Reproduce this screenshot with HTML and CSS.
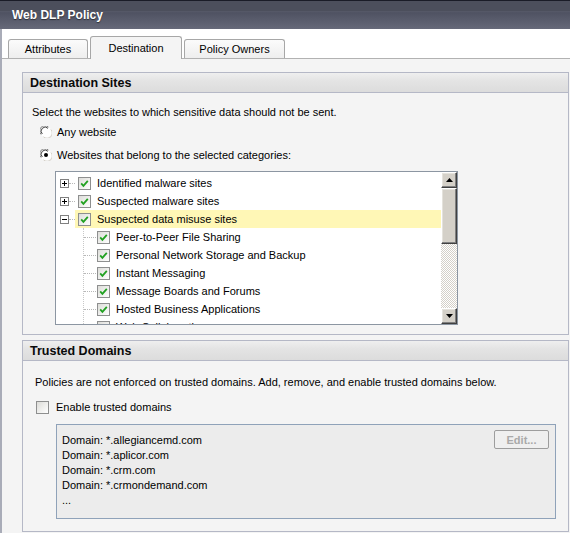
FILE: index.html
```html
<!DOCTYPE html>
<html>
<head>
<meta charset="utf-8">
<link rel="stylesheet" href="styles.css">
</head>
<body>
<div class="header"><span class="title">Web DLP Policy</span></div>
<div class="main">
  <div class="tabs">
    <div class="tab t-attr">Attributes</div>
    <div class="tab active t-dest">Destination</div>
    <div class="tab t-own">Policy Owners</div>
  </div>
  <div class="panel">
    <section class="group dest">
      <div class="group-head">Destination Sites</div>
      <div class="group-body dest-body">
        <p class="intro">Select the websites to which sensitive data should not be sent.</p>
        <div class="radio-row">
          <svg class="radio" width="12" height="12" viewBox="0 0 12 12"><circle cx="6" cy="6" r="5.5" fill="#fff"/><path d="M1.2 8.5A5 5 0 0 1 8.5 1.2" fill="none" stroke="#808080" stroke-width="1"/><path d="M2.3 8A4 4 0 0 1 8 2.3" fill="none" stroke="#404040" stroke-width="1"/><path d="M3.5 10.8A5 5 0 0 0 10.8 3.5" fill="none" stroke="#d4d0c8" stroke-width="1"/></svg>
          <span>Any website</span>
        </div>
        <div class="radio-row">
          <svg class="radio" width="12" height="12" viewBox="0 0 12 12"><circle cx="6" cy="6" r="5.5" fill="#fff"/><path d="M1.2 8.5A5 5 0 0 1 8.5 1.2" fill="none" stroke="#808080" stroke-width="1"/><path d="M2.3 8A4 4 0 0 1 8 2.3" fill="none" stroke="#404040" stroke-width="1"/><path d="M3.5 10.8A5 5 0 0 0 10.8 3.5" fill="none" stroke="#d4d0c8" stroke-width="1"/><circle cx="6" cy="6" r="2" fill="#000"/></svg>
          <span>Websites that belong to the selected categories:</span>
        </div>
        <div class="tree">
          <div class="tree-list">
            <div class="row parent">
              <svg class="exp" width="9" height="9" viewBox="0 0 9 9"><rect x="0.5" y="0.5" width="8" height="8" fill="#fff" stroke="#808080"/><path d="M2 4.5h5M4.5 2v5" stroke="#000"/></svg>
              <span class="hline"></span>
              <span class="item"><svg class="cb" width="13" height="13" viewBox="0 0 13 13"><rect x="0.5" y="0.5" width="12" height="12" fill="url(#g)" stroke="#8e8f8f"/><path d="M3.2 6.4l2.2 2.4 4.4-5" fill="none" stroke="#21a121" stroke-width="1.8"/></svg><span>Identified malware sites</span></span>
            </div>
            <div class="row parent">
              <svg class="exp" width="9" height="9" viewBox="0 0 9 9"><rect x="0.5" y="0.5" width="8" height="8" fill="#fff" stroke="#808080"/><path d="M2 4.5h5M4.5 2v5" stroke="#000"/></svg>
              <span class="hline"></span>
              <span class="item"><svg class="cb" width="13" height="13" viewBox="0 0 13 13"><rect x="0.5" y="0.5" width="12" height="12" fill="url(#g)" stroke="#8e8f8f"/><path d="M3.2 6.4l2.2 2.4 4.4-5" fill="none" stroke="#21a121" stroke-width="1.8"/></svg><span>Suspected malware sites</span></span>
            </div>
            <div class="row parent">
              <svg class="exp" width="9" height="9" viewBox="0 0 9 9"><rect x="0.5" y="0.5" width="8" height="8" fill="#fff" stroke="#808080"/><path d="M2 4.5h5" stroke="#000"/></svg>
              <span class="hline"></span>
              <span class="item selected"><svg class="cb" width="13" height="13" viewBox="0 0 13 13"><rect x="0.5" y="0.5" width="12" height="12" fill="url(#g)" stroke="#8e8f8f"/><path d="M3.2 6.4l2.2 2.4 4.4-5" fill="none" stroke="#21a121" stroke-width="1.8"/></svg><span>Suspected data misuse sites</span></span>
            </div>
            <div class="children">
              <div class="row child"><span class="cline"></span><svg class="cb" width="13" height="13" viewBox="0 0 13 13"><rect x="0.5" y="0.5" width="12" height="12" fill="url(#g)" stroke="#8e8f8f"/><path d="M3.2 6.4l2.2 2.4 4.4-5" fill="none" stroke="#21a121" stroke-width="1.8"/></svg><span>Peer-to-Peer File Sharing</span></div>
              <div class="row child"><span class="cline"></span><svg class="cb" width="13" height="13" viewBox="0 0 13 13"><rect x="0.5" y="0.5" width="12" height="12" fill="url(#g)" stroke="#8e8f8f"/><path d="M3.2 6.4l2.2 2.4 4.4-5" fill="none" stroke="#21a121" stroke-width="1.8"/></svg><span>Personal Network Storage and Backup</span></div>
              <div class="row child"><span class="cline"></span><svg class="cb" width="13" height="13" viewBox="0 0 13 13"><rect x="0.5" y="0.5" width="12" height="12" fill="url(#g)" stroke="#8e8f8f"/><path d="M3.2 6.4l2.2 2.4 4.4-5" fill="none" stroke="#21a121" stroke-width="1.8"/></svg><span>Instant Messaging</span></div>
              <div class="row child"><span class="cline"></span><svg class="cb" width="13" height="13" viewBox="0 0 13 13"><rect x="0.5" y="0.5" width="12" height="12" fill="url(#g)" stroke="#8e8f8f"/><path d="M3.2 6.4l2.2 2.4 4.4-5" fill="none" stroke="#21a121" stroke-width="1.8"/></svg><span>Message Boards and Forums</span></div>
              <div class="row child"><span class="cline"></span><svg class="cb" width="13" height="13" viewBox="0 0 13 13"><rect x="0.5" y="0.5" width="12" height="12" fill="url(#g)" stroke="#8e8f8f"/><path d="M3.2 6.4l2.2 2.4 4.4-5" fill="none" stroke="#21a121" stroke-width="1.8"/></svg><span>Hosted Business Applications</span></div>
              <div class="row child"><span class="cline"></span><svg class="cb" width="13" height="13" viewBox="0 0 13 13"><rect x="0.5" y="0.5" width="12" height="12" fill="url(#g)" stroke="#8e8f8f"/><path d="M3.2 6.4l2.2 2.4 4.4-5" fill="none" stroke="#21a121" stroke-width="1.8"/></svg><span>Web Collaboration</span></div>
            </div>
          </div>
          <div class="scrollbar">
            <div class="sb-btn"><svg width="7" height="4" viewBox="0 0 7 4"><path d="M3.5 0L7 4H0z" fill="#000"/></svg></div>
            <div class="sb-thumb"></div>
            <div class="sb-track"></div>
            <div class="sb-btn"><svg width="7" height="4" viewBox="0 0 7 4"><path d="M0 0h7L3.5 4z" fill="#000"/></svg></div>
          </div>
        </div>
      </div>
    </section>
    <section class="group trusted">
      <div class="group-head">Trusted Domains</div>
      <div class="group-body trusted-body">
        <p class="desc">Policies are not enforced on trusted domains. Add, remove, and enable trusted domains below.</p>
        <div class="check-row">
          <span class="box"></span>
          <span>Enable trusted domains</span>
        </div>
        <div class="domains">
          <div class="domain-list">
            <div>Domain: *.allegiancemd.com</div>
            <div>Domain: *.aplicor.com</div>
            <div>Domain: *.crm.com</div>
            <div>Domain: *.crmondemand.com</div>
            <div>...</div>
          </div>
          <div class="edit-btn">Edit...</div>
        </div>
      </div>
    </section>
  </div>
</div>
<svg width="0" height="0" class="defs"><defs><linearGradient id="g" x1="0" y1="0" x2="1" y2="1"><stop offset="0" stop-color="#dcdcd8"/><stop offset="1" stop-color="#ffffff"/></linearGradient></defs></svg>
</body>
</html>
```
FILE: styles.css
```css
* { box-sizing: border-box; }
html, body { margin: 0; padding: 0; }
body {
  background: #fff;
  font-family: "Liberation Sans", Arial, sans-serif;
  font-size: 11px;
  color: #000;
  width: 570px;
  height: 533px;
  overflow: hidden;
}
.defs { position: absolute; }
.header {
  height: 29px;
  border-top: 1px solid #1a1c27;
  background: linear-gradient(#4c4f5c, #4c4f5c 35%, #575a69 38%, #4f5262 42%, #666979);
  display: flex;
  align-items: center;
  padding-left: 12px;
}
.title {
  color: #fff;
  font-weight: bold;
  font-size: 12px;
  text-shadow: 0 1px 1px rgba(0,0,0,0.5);
}
.main {
  border-left: 2px solid #a9acb8;
  height: 504px;
  display: flex;
  flex-direction: column;
}
.tabs {
  height: 30px;
  display: flex;
  align-items: flex-end;
  gap: 2px;
  padding-left: 6px;
  border-bottom: 1px solid #b2b2b2;
}
.tab {
  height: 19px;
  border: 1px solid #a7a7a7;
  border-bottom: none;
  border-radius: 3px 3px 0 0;
  background: linear-gradient(#fbfbfb, #eeeeee);
  display: flex;
  align-items: center;
  justify-content: center;
  padding-bottom: 1px;
}
.t-attr { width: 80px; }
.t-dest { width: 92px; }
.t-own { width: 101px; }
.tab.active {
  height: 23px;
  margin-bottom: -1px;
  background: #f4f4f4;
  padding-bottom: 0;
}
.panel {
  flex: 1;
  background: #f4f4f4;
  padding: 13px 1px 0 20px;
  display: flex;
  flex-direction: column;
  gap: 5px;
}
.group {
  border: 1px solid #b5b8c6;
}
.group-head {
  height: 20px;
  border-bottom: 1px solid #b5b8c6;
  background: linear-gradient(#efefef, #e4e4e4 40%, #dcdcdc);
  font-weight: bold;
  font-size: 12.5px;
  padding-left: 7px;
  padding-top: 1px;
  display: flex;
  align-items: center;
  color: #0a0a0a;
}
.dest-body {
  padding: 11px 0 9px 9px;
}
.intro, .desc {
  margin: 0;
  height: 16px;
  line-height: 16px;
}
.radio-row {
  height: 23px;
  display: flex;
  align-items: center;
  padding-left: 8px;
  padding-top: 1px;
  gap: 5px;
}
.tree {
  margin: 5px 0 0 23px;
  width: 403px;
  height: 154px;
  border: 1px solid #8c96a2;
  background: #fff;
  display: flex;
}
.tree-list {
  flex: 1;
  overflow: hidden;
  padding-top: 2px;
}
.row {
  height: 18px;
  display: flex;
  align-items: center;
  position: relative;
}
.parent { padding-left: 4px; }
.exp { flex: none; }
.hline {
  width: 6px;
  border-top: 1px dotted #b8b8b8;
}
.item {
  height: 18px;
  display: flex;
  align-items: center;
  gap: 6px;
  padding-left: 3px;
  flex: 1;
}
.item.selected { background: #fff7b6; }
.cb { flex: none; }
.children {
  margin-left: 27px;
  border-left: 1px dotted #c8c8c8;
}
.child { gap: 6px; }
.cline {
  width: 12px;
  border-top: 1px dotted #b8b8b8;
  margin-right: -5px;
}
.scrollbar {
  width: 16px;
  display: flex;
  flex-direction: column;
}
.sb-btn, .sb-thumb {
  background: #d4d0c8;
  border: 1px solid;
  border-color: #ffffff #404040 #404040 #ffffff;
  box-shadow: inset -1px -1px 0 #808080, inset 1px 1px 0 #e4e2dc;
}
.sb-btn {
  height: 16px;
  display: flex;
  align-items: center;
  justify-content: center;
}
.sb-thumb { height: 56px; }
.sb-track {
  flex: 1;
  background: repeating-conic-gradient(#d4d0c8 0 25%, #ffffff 0 50%) 0 0 / 2px 2px;
}
.trusted-body {
  padding: 13px 12px 12px 12px;
}
.check-row {
  height: 20px;
  margin-top: 7px;
  display: flex;
  align-items: center;
  gap: 7px;
  padding-left: 1px;
}
.box {
  width: 13px;
  height: 13px;
  border: 1px solid #8e8f8f;
  background: linear-gradient(135deg, #dcdcd8, #ffffff);
}
.domains {
  margin: 7px 0 0 21px;
  width: 500px;
  height: 95px;
  border: 1px solid #8fa2b9;
  background: #ececec;
  display: flex;
  padding: 7px 6px 0 5px;
}
.domain-list {
  flex: 1;
  line-height: 15px;
  padding-top: 1px;
}
.edit-btn {
  width: 55px;
  height: 19px;
  border: 1px solid #9d9d9d;
  border-radius: 2px;
  color: #a9a9a9;
  font-weight: bold;
  display: flex;
  align-items: center;
  justify-content: center;
  margin-top: -2px;
  background: #efefef;
}
```
